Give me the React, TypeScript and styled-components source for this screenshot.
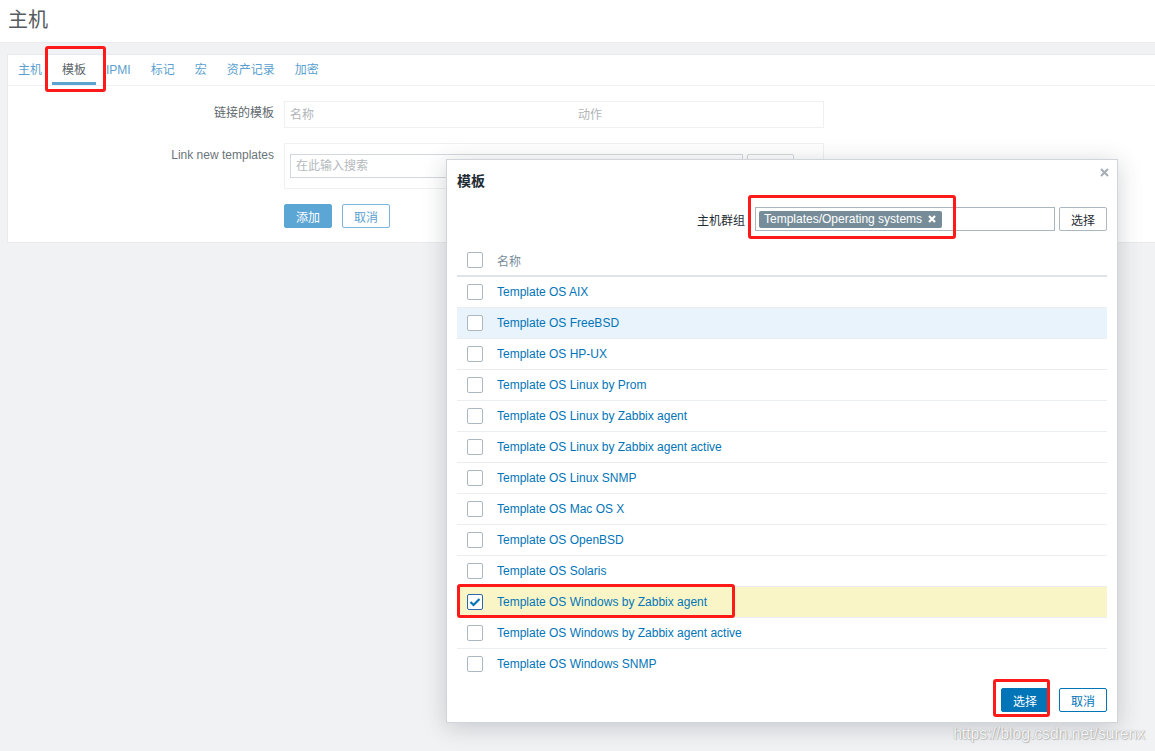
import React from "react";
import styled, { createGlobalStyle, css } from "styled-components";

const FONT = `"Liberation Sans", Arial, "Noto Sans CJK SC", sans-serif`;

const GlobalStyle = createGlobalStyle`
  html, body {
    margin: 0;
    padding: 0;
    background: #f1f2f4;
    font-family: ${FONT};
    font-size: 12px;
    overflow: hidden;
  }
`;

// red marker drawn around a highlighted element
const marker = (t: number, r: number, b: number, l: number) => css`
  position: relative;
  &::after {
    content: "";
    position: absolute;
    top: ${t}px;
    right: ${r}px;
    bottom: ${b}px;
    left: ${l}px;
    border: 3px solid #ff1a1a;
    border-radius: 3px;
    pointer-events: none;
    z-index: 5;
  }
`;

const Page = styled.div`
  position: relative;
  width: 1155px;
  height: 751px;
  overflow: hidden;
`;

const Header = styled.header`
  height: 42px;
  background: #fff;
  border-bottom: 1px solid #e9ebee;
  display: flex;
  align-items: center;
  padding-left: 8px;
`;

const Title = styled.h1`
  margin: 0;
  font-size: 20px;
  font-weight: normal;
  color: #555b60;
  line-height: 20px;
  margin-top: -2px;
`;

const Card = styled.section`
  margin: 11px -20px 0 7px;
  background: #fff;
  border: 1px solid #e8eaed;
`;

const TabBar = styled.nav`
  display: flex;
  height: 30px;
  border-bottom: 1px solid #eef0f2;
`;

const Tab = styled.div<{ $active?: boolean; $marked?: boolean }>`
  padding: 8px 10px 0;
  height: 30px;
  line-height: 14px;
  color: #5a9fd0;
  box-sizing: border-box;
  ${({ $active }) =>
    $active &&
    css`
      color: #5b656b;
      border-bottom: 3px solid #5ba3d0;
    `}
  ${({ $marked }) => $marked && marker(-9, -10, -10, -7)}
`;

const Form = styled.div`
  display: grid;
  grid-template-columns: 266px 540px;
  column-gap: 10px;
  row-gap: 15px;
  padding: 15px 0 14px 0;
`;

const Label = styled.label<{ $soft?: boolean }>`
  text-align: right;
  padding-top: 5px;
  line-height: 14px;
  color: ${({ $soft }) => ($soft ? "#6b7479" : "#5e676d")};
`;

const ListBox = styled.div`
  height: 25px;
  border: 1px solid #eef0f2;
  display: grid;
  grid-template-columns: 288px 1fr;
  align-items: center;
  line-height: 14px;
  padding: 0 5px;
  color: #b0b5b9;
`;

const FieldBox = styled.div`
  border: 1px solid #eef0f2;
  padding: 10px 5px;
  display: flex;
  gap: 4px;
`;

const SearchInput = styled.div`
  height: 22px;
  width: 446px;
  border: 1px solid #d3d8dc;
  display: flex;
  align-items: center;
  line-height: 14px;
  padding-left: 5px;
  color: #b4b9bd;
`;

const GhostButton = styled.div`
  width: 45px;
  height: 22px;
  border: 1px solid #d3d8dc;
  border-radius: 2px;
`;

const Actions = styled.div`
  display: flex;
  gap: 10px;
`;

const Button = styled.div<{ $kind: "primary" | "outline" | "plain"; $faded?: boolean; $marked?: boolean }>`
  height: 24px;
  min-width: 48px;
  box-sizing: border-box;
  padding: 0 8px;
  border-radius: 2px;
  display: flex;
  align-items: center;
  justify-content: center;
  font-size: 12px;
  ${({ $kind, $faded }) =>
    $kind === "primary"
      ? css`
          background: ${$faded ? "#5ba6d5" : "#0275b8"};
          border: 1px solid ${$faded ? "#5ba6d5" : "#0275b8"};
          color: #fff;
        `
      : $kind === "outline"
      ? css`
          background: #fff;
          border: 1px solid ${$faded ? "#79b6dd" : "#0275b8"};
          color: ${$faded ? "#5a9fd0" : "#0275b8"};
        `
      : css`
          background: #fff;
          border: 1px solid #acb8bf;
          color: #1f2c33;
        `}
  ${({ $marked }) => $marked && marker(-10, -2, -6, -9)}
`;

const Dialog = styled.div`
  position: absolute;
  left: 446px;
  top: 159px;
  width: 670px;
  background: #fff;
  border: 1px solid #d0d5d9;
  box-shadow: 0 4px 22px rgba(40, 50, 60, 0.22);
  z-index: 2;
`;

const DialogHead = styled.div`
  position: relative;
  padding: 14px 10px 0;
  height: 14px;
`;

const DialogTitle = styled.h4`
  margin: 0;
  font-size: 14px;
  line-height: 14px;
  font-weight: bold;
  color: #1f2c33;
`;

const CloseIcon = styled.svg`
  position: absolute;
  top: 8px;
  right: 8px;
`;

const DialogBody = styled.div`
  padding: 19px 10px 10px;
`;

const FilterRow = styled.div`
  display: flex;
  justify-content: flex-end;
  align-items: center;
  height: 24px;
`;

const FilterLabel = styled.span`
  color: #1f2c33;
  margin-right: 10px;
`;

const MultiSelect = styled.div`
  height: 22px;
  width: 295px;
  border: 1px solid #aab6bd;
  display: flex;
  align-items: center;
  padding-left: 3px;
  margin-right: 4px;
`;

const Tag = styled.span`
  height: 17px;
  background: #768d99;
  color: #fff;
  border-radius: 2px;
  display: inline-flex;
  align-items: center;
  gap: 6px;
  padding: 0 6px 0 5px;
  ${marker(-16, -14, -11, -11)}
`;

const Grid = styled.div`
  margin-top: 14px;
`;

const HeadRow = styled.div`
  height: 30px;
  display: flex;
  align-items: center;
  border-bottom: 2px solid #dfe4e7;
  color: #768d99;
`;

const Row = styled.div<{ $bg?: string }>`
  position: relative;
  height: 30px;
  display: flex;
  align-items: center;
  border-bottom: 1px solid #ebeef0;
  background: ${({ $bg }) => $bg || "#fff"};
  &:last-child {
    border-bottom: none;
  }
`;

const RowMark = styled.span`
  position: absolute;
  left: 0;
  top: -3px;
  width: 278px;
  height: 34px;
  box-sizing: border-box;
  border: 3px solid #ff1a1a;
  border-radius: 3px;
`;

const CheckCell = styled.div`
  width: 40px;
  padding-left: 10px;
  box-sizing: border-box;
  display: flex;
`;

const Check = styled.span<{ $on?: boolean }>`
  width: 16px;
  height: 16px;
  box-sizing: border-box;
  border: 1px solid ${({ $on }) => ($on ? "#2b6aa6" : "#acb8bf")};
  border-radius: 2px;
  background: #fff;
  display: flex;
  align-items: center;
  justify-content: center;
`;

const Link = styled.span`
  color: #0275b8;
`;

const Footer = styled.div`
  display: flex;
  justify-content: flex-end;
  gap: 10px;
  margin-top: 9px;
`;

const Watermark = styled.div`
  position: absolute;
  right: 10px;
  bottom: 8px;
  font-size: 15.7px;
  color: rgba(255, 255, 255, 0.92);
  text-shadow: 0 0 1px rgba(80, 80, 80, 0.55), 1px 1px 1px rgba(120, 120, 120, 0.35);
  z-index: 6;
`;

const templates = [
  "Template OS AIX",
  "Template OS FreeBSD",
  "Template OS HP-UX",
  "Template OS Linux by Prom",
  "Template OS Linux by Zabbix agent",
  "Template OS Linux by Zabbix agent active",
  "Template OS Linux SNMP",
  "Template OS Mac OS X",
  "Template OS OpenBSD",
  "Template OS Solaris",
  "Template OS Windows by Zabbix agent",
  "Template OS Windows by Zabbix agent active",
  "Template OS Windows SNMP",
];

const tabs = ["主机", "模板", "IPMI", "标记", "宏", "资产记录", "加密"];

function CheckBox({ on }: { on?: boolean }) {
  return (
    <Check $on={on}>
      {on && (
        <svg width="12" height="10" viewBox="0 0 12 10">
          <path d="M1.5 5 L4.5 8 L10.5 2" fill="none" stroke="#0275b8" strokeWidth="2.2" />
        </svg>
      )}
    </Check>
  );
}

export default function App() {
  return (
    <Page>
      <GlobalStyle />
      <Header>
        <Title>主机</Title>
      </Header>
      <Card>
        <TabBar>
          {tabs.map((t) => (
            <Tab key={t} $active={t === "模板"} $marked={t === "模板"}>
              {t}
            </Tab>
          ))}
        </TabBar>
        <Form>
          <Label>链接的模板</Label>
          <ListBox>
            <span>名称</span>
            <span>动作</span>
          </ListBox>
          <Label $soft>Link new templates</Label>
          <FieldBox>
            <SearchInput>在此输入搜索</SearchInput>
            <GhostButton />
          </FieldBox>
          <span />
          <Actions>
            <Button $kind="primary" $faded>添加</Button>
            <Button $kind="outline" $faded>取消</Button>
          </Actions>
        </Form>
      </Card>

      <Dialog>
        <DialogHead>
          <DialogTitle>模板</DialogTitle>
          <CloseIcon width="9" height="9" viewBox="0 0 9 9">
            <path d="M1 1 L8 8 M8 1 L1 8" stroke="#a3adb3" strokeWidth="2" />
          </CloseIcon>
        </DialogHead>
        <DialogBody>
          <FilterRow>
            <FilterLabel>主机群组</FilterLabel>
            <MultiSelect>
              <Tag>
                Templates/Operating systems
                <svg width="8" height="8" viewBox="0 0 8 8">
                  <path d="M1 1 L7 7 M7 1 L1 7" stroke="#fff" strokeWidth="2.2" />
                </svg>
              </Tag>
            </MultiSelect>
            <Button $kind="plain">选择</Button>
          </FilterRow>
          <Grid>
            <HeadRow>
              <CheckCell>
                <CheckBox />
              </CheckCell>
              名称
            </HeadRow>
            {templates.map((name, i) => {
              const picked = name === "Template OS Windows by Zabbix agent";
              return (
                <Row key={name} $bg={picked ? "#faf5c7" : i === 1 ? "#e8f3fc" : undefined}>
                  {picked && <RowMark />}
                  <CheckCell>
                    <CheckBox on={picked} />
                  </CheckCell>
                  <Link>{name}</Link>
                </Row>
              );
            })}
          </Grid>
          <Footer>
            <Button $kind="primary" $marked>选择</Button>
            <Button $kind="outline">取消</Button>
          </Footer>
        </DialogBody>
      </Dialog>
      <Watermark>https://blog.csdn.net/surenx</Watermark>
    </Page>
  );
}
